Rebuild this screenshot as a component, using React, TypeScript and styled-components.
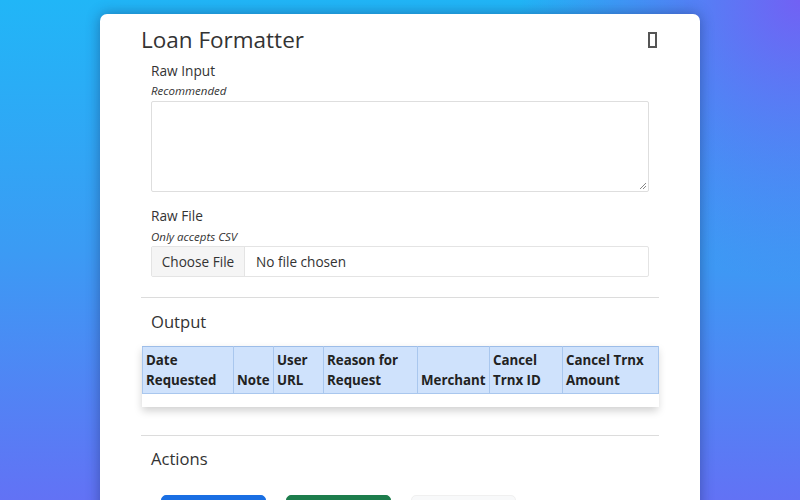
import React from "react";
import styled, { createGlobalStyle } from "styled-components";

const Global = createGlobalStyle`
  html, body { margin: 0; padding: 0; height: 100%; overflow: hidden; }
  body {
    font-family: "Open Sans", "Noto Sans", sans-serif;
    color: #333;
    background:
      radial-gradient(circle at 100% 0%, rgba(118, 92, 244, 0.95) 0px, rgba(118, 92, 244, 0) 280px),
      linear-gradient(to bottom, #21b6f7 0%, #3b9bf4 50%, #6272f5 100%);
  }
  #root { height: 100%; }
`;

const Page = styled.div`
  height: 100%;
  display: flex;
  justify-content: center;
  padding-top: 14px;
  box-sizing: border-box;
  overflow: hidden;
`;

const Card = styled.div`
  width: 600px;
  background: #fff;
  border-radius: 7px;
  box-shadow: 0 0 14px rgba(20, 40, 90, 0.45);
  padding: 12px 41px 0;
  box-sizing: border-box;
  height: 600px;
  flex-shrink: 0;
`;

const Header = styled.div`
  display: flex;
  justify-content: space-between;
  align-items: center;
`;

const Title = styled.h1`
  margin: 0;
  font-size: 22.5px;
  line-height: 28px;
  font-weight: 400;
  color: #333;
`;

const Tofu = styled.span`
  width: 5px;
  height: 12px;
  border: 2px solid #555;
  margin-right: 2px;
`;

const Group = styled.div<{ $top: number }>`
  padding: 0 10px;
  margin-top: ${(p) => p.$top}px;
  display: flex;
  flex-direction: column;
`;

const Label = styled.label`
  font-size: 13.7px;
  line-height: 20px;
  color: #333;
`;

const Hint = styled.small<{ $gap: number }>`
  font-size: 11.5px;
  line-height: 16px;
  font-style: italic;
  color: #333;
  margin-top: ${(p) => p.$gap}px;
`;

const TextArea = styled.div`
  margin-top: 2px;
  height: 91px;
  border: 1px solid #dedede;
  border-radius: 2px;
  position: relative;
  box-sizing: border-box;
`;

const Grip = styled.svg`
  position: absolute;
  right: 1px;
  bottom: 1px;
`;

const FileInput = styled.div`
  margin-top: 1px;
  height: 31px;
  border: 1px solid #e4e4e4;
  border-radius: 2px;
  display: flex;
  align-items: stretch;
  box-sizing: border-box;
  font-size: 13.6px;
`;

const FileButton = styled.div`
  width: 92px;
  background: #f5f5f5;
  border-right: 1px solid #e4e4e4;
  display: flex;
  align-items: center;
  justify-content: center;
  color: #333;
`;

const FileName = styled.div`
  display: flex;
  align-items: center;
  padding-left: 11px;
  color: #333;
`;

const Rule = styled.hr<{ $top: number }>`
  margin: ${(p) => p.$top}px 0 0;
  border: 0;
  border-top: 1px solid #dcdcdc;
`;

const SectionTitle = styled.h2<{ $top: number }>`
  margin: ${(p) => p.$top}px 0 0;
  padding-left: 10px;
  font-size: 16.6px;
  line-height: 24px;
  font-weight: 400;
  color: #333;
`;

const TableWrap = styled.div`
  margin: 12px 1px 0;
  box-shadow: 0 4px 8px rgba(0, 0, 0, 0.18);
`;

const Table = styled.table`
  width: 100%;
  border-collapse: collapse;
  table-layout: fixed;
  font-size: 13.3px;
`;

const Th = styled.th<{ $w: number }>`
  box-sizing: border-box;
  width: ${(p) => p.$w}px;
  background: #cfe2fc;
  border: 1px solid #a9c7ee;
  border-top-color: #9dbde8;
  padding: 3px;
  text-align: left;
  vertical-align: bottom;
  font-weight: 700;
  line-height: 20px;
  color: #222;
`;

const Td = styled.td`
  height: 13px;
  padding: 0;
  background: #fff;
`;

const Buttons = styled.div`
  display: flex;
  gap: 20px;
  margin-top: 24px;
  padding-left: 20px;
`;

const Btn = styled.button<{ $bg: string; $border: string }>`
  width: 105px;
  height: 36px;
  background: ${(p) => p.$bg};
  border: 1px solid ${(p) => p.$border};
  border-radius: 5px;
`;

const cols: [string, number][] = [
  ["Date Requested", 91],
  ["Note", 40],
  ["User URL", 50],
  ["Reason for Request", 94],
  ["Merchant", 72],
  ["Cancel Trnx ID", 73],
  ["Cancel Trnx Amount", 96],
];

export default function App() {
  return (
    <>
      <Global />
      <Page>
        <Card>
          <Header>
            <Title>Loan Formatter</Title>
            <Tofu />
          </Header>
          <Group $top={7}>
            <Label>Raw Input</Label>
            <Hint $gap={2}>Recommended</Hint>
            <TextArea>
              <Grip width="8" height="8" viewBox="0 0 8 8">
                <path d="M7 1 L1 7 M7 4 L4 7" stroke="#888" strokeWidth="1" />
              </Grip>
            </TextArea>
          </Group>
          <Group $top={14}>
            <Label>Raw File</Label>
            <Hint $gap={3}>Only accepts CSV</Hint>
            <FileInput>
              <FileButton>Choose File</FileButton>
              <FileName>No file chosen</FileName>
            </FileInput>
          </Group>
          <Rule $top={20} />
          <SectionTitle $top={12}>Output</SectionTitle>
          <TableWrap>
            <Table>
              <thead>
                <tr>
                  {cols.map(([c, w]) => (
                    <Th key={c} $w={w}>
                      {c}
                    </Th>
                  ))}
                </tr>
              </thead>
              <tbody>
                <tr>
                  <Td colSpan={7} />
                </tr>
              </tbody>
            </Table>
          </TableWrap>
          <Rule $top={28} />
          <SectionTitle $top={11}>Actions</SectionTitle>
          <Buttons>
            <Btn $bg="#1a6fe3" $border="#1a6fe3" />
            <Btn $bg="#1d7d4c" $border="#1d7d4c" />
            <Btn $bg="#f8f9fa" $border="#f0f0f0" />
          </Buttons>
        </Card>
      </Page>
    </>
  );
}
